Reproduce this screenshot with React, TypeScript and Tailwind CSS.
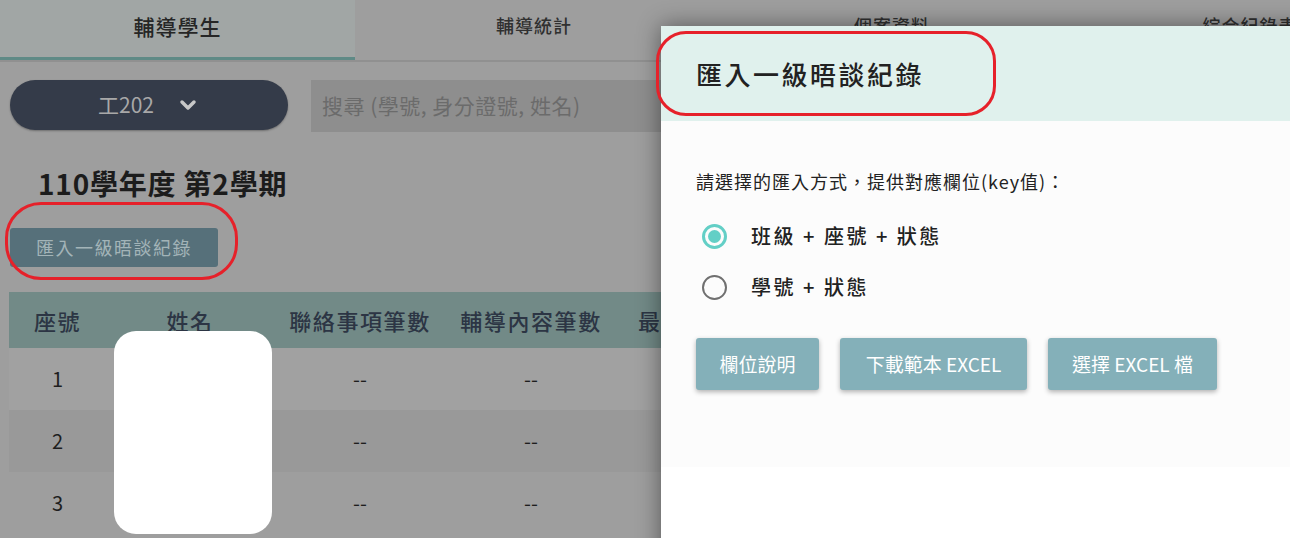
import { ChevronDown } from 'lucide-react'

const tabs = ['輔導學生', '輔導統計', '個案資料', '綜合紀錄表']

const rows = [
  { seat: '1', bg: 'bg-[#a1a1a1]' },
  { seat: '2', bg: 'bg-[#999999]' },
  { seat: '3', bg: 'bg-[#9e9e9e]' },
]

export default function App() {
  return (
    <div className="relative h-[538px] w-[1290px] overflow-hidden bg-[#9e9e9e] font-['Noto_Sans_CJK_TC','Noto_Sans_CJK_SC',sans-serif]">
      {/* 分頁 */}
      <nav className="flex h-[62px] border-b-2 border-[#909090]">
        {tabs.map((t, i) => (
          <div
            key={t}
            className={
              i === 0
                ? 'flex w-[355px] shrink-0 items-center justify-center border-b-[3px] border-[#5f8a86] bg-[#a1a6a5] pb-[4px] text-[21px] font-medium tracking-[1px] text-[#262626]'
                : 'flex w-[358px] shrink-0 items-center justify-center pb-[10px] text-[18px] font-medium tracking-[1px] text-[#303030]'
            }
          >
            {t}
          </div>
        ))}
      </nav>

      {/* 班級 + 搜尋 */}
      <div className="mt-[18px] flex items-start gap-[23px] pl-[10px]">
        <button className="flex h-[50px] w-[278px] items-center justify-center gap-[22px] rounded-full bg-[#343b49] text-[21px] text-[#a8a8a8] shadow-[0_1px_2px_rgba(0,0,0,0.3)]">
          <span>工202</span>
          <ChevronDown size={24} strokeWidth={3.5} className="text-[#c8c8c8]" />
        </button>
        <div className="flex h-[52px] flex-1 items-center bg-[#8e8e8e] pl-[11px] text-[21px] tracking-[0.5px] text-[#6b6b6b]">
          搜尋 (學號, 身分證號, 姓名)
        </div>
      </div>

      <h2 className="mt-[33px] pl-[38px] text-[28px] font-bold leading-[36px] tracking-[0.8px] text-[#1c1c1c]">
        110學年度 第2學期
      </h2>

      <button className="ml-[10px] mt-[27px] flex h-[39px] w-[208px] items-center justify-center rounded-[3px] bg-[#56707a] text-[18px] tracking-[1.5px] text-[#a3b4b8]">
        匯入一級晤談紀錄
      </button>

      {/* 學生列表 */}
      <div className="ml-[9px] mt-[25px] w-[1270px]">
        <div className="flex h-[56px] items-center bg-[#728a87] text-[22px] font-medium tracking-[1.6px] text-[#2c3544]">
          <div className="w-[97px] text-center">座號</div>
          <div className="w-[168px] text-center">姓名</div>
          <div className="w-[172px] text-center">聯絡事項筆數</div>
          <div className="w-[170px] text-center">輔導內容筆數</div>
          <div className="pl-[22px]">最後輔導日期</div>
        </div>
        {rows.map((r) => (
          <div key={r.seat} className={`flex h-[62px] items-center text-[20px] text-[#1e1e1e] ${r.bg}`}>
            <div className="w-[97px] text-center">{r.seat}</div>
            <div className="w-[168px]" />
            <div className="w-[172px] text-center">--</div>
            <div className="w-[170px] text-center">--</div>
          </div>
        ))}
      </div>

      {/* 遮蔽姓名 */}
      <div className="absolute left-[114px] top-[331px] h-[203px] w-[158px] rounded-[22px] bg-white" />

      {/* 紅框標示 */}
      <div className="absolute left-[5px] top-[202px] h-[78px] w-[233px] rounded-[36px] border-[3px] border-[#e6212a]" />

      {/* 匯入對話框 */}
      <div className="absolute left-[661px] top-[26px] h-[560px] w-[700px] bg-white shadow-[0_0_22px_rgba(0,0,0,0.45)]">
        <div className="flex h-[95px] items-center bg-[#e0f1ed] pl-[35px] text-[26px] font-medium tracking-[2.5px] text-[#222]">
          匯入一級晤談紀錄
        </div>
        <div className="bg-[#fcfcfc] pb-[77px] pl-[35px] pt-[47px]">
          <p className="h-[26px] text-[18px] leading-[26px] tracking-[1px] text-[#222]">
            請選擇的匯入方式，提供對應欄位(key值)：
          </p>
          <div className="mt-[22px] flex h-[40px] items-center gap-[24px] pl-[6px]">
            <span className="flex h-[25px] w-[25px] items-center justify-center rounded-full border-[3px] border-[#63cfc6]">
              <span className="h-[13px] w-[13px] rounded-full bg-[#63cfc6]" />
            </span>
            <span className="text-[20px] font-medium tracking-[2.5px] text-[#222]">班級 + 座號 + 狀態</span>
          </div>
          <div className="mt-[11px] flex h-[40px] items-center gap-[24px] pl-[6px]">
            <span className="h-[25px] w-[25px] rounded-full border-[2.5px] border-[#707070]" />
            <span className="text-[20px] font-medium tracking-[2.5px] text-[#222]">學號 + 狀態</span>
          </div>
          <div className="mt-[31px] flex gap-[21px]">
            <button className="h-[52px] w-[123px] rounded-[3px] bg-[#84b0b9] text-[19px] text-white shadow-[0_2px_5px_rgba(0,0,0,0.3)]">
              欄位說明
            </button>
            <button className="h-[52px] w-[187px] rounded-[3px] bg-[#84b0b9] text-[19px] text-white shadow-[0_2px_5px_rgba(0,0,0,0.3)]">
              下載範本 EXCEL
            </button>
            <button className="h-[52px] w-[169px] rounded-[3px] bg-[#84b0b9] text-[19px] text-white shadow-[0_2px_5px_rgba(0,0,0,0.3)]">
              選擇 EXCEL 檔
            </button>
          </div>
        </div>
      </div>

      <div className="absolute left-[656px] top-[31px] h-[85px] w-[340px] rounded-[30px] border-[3px] border-[#e6212a]" />
    </div>
  )
}
